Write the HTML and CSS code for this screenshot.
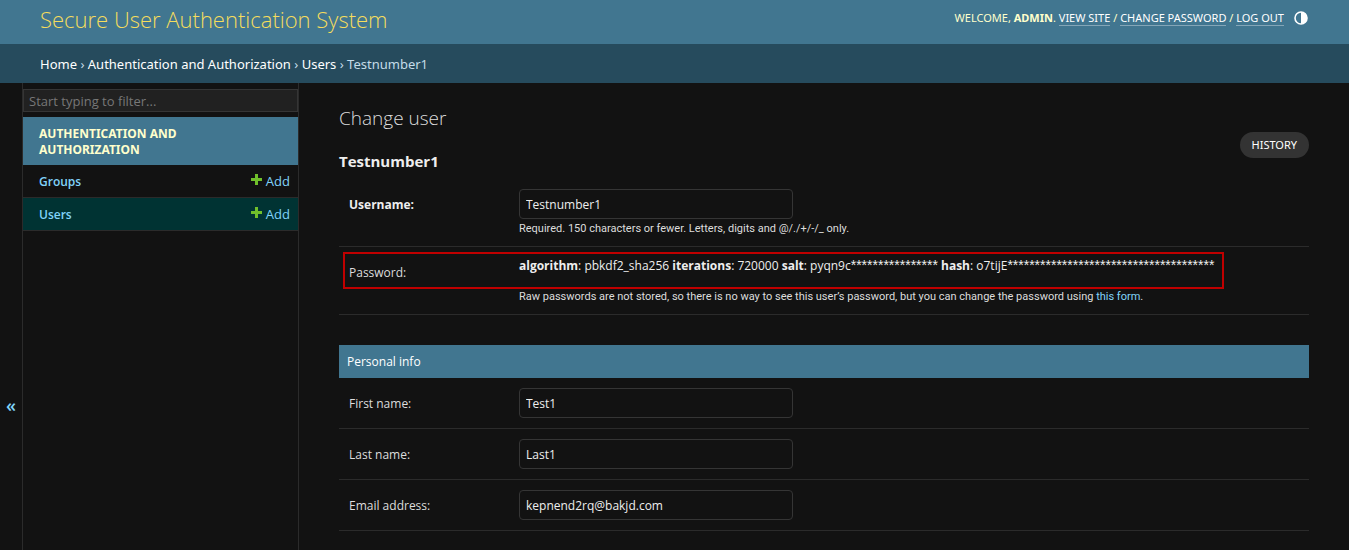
FILE: index.html
```html
<!DOCTYPE html>
<html lang="en">
<head>
<meta charset="utf-8">
<title>Testnumber1 | Change user</title>
<link rel="stylesheet" href="styles.css">
</head>
<body>
<header class="header">
  <h1 class="site-name"><a href="#">Secure User Authentication System</a></h1>
  <div class="user-tools">
    <span>Welcome, <strong>admin</strong>. <a href="#">View site</a> / <a href="#">Change password</a> / <a href="#">Log out</a></span>
    <button class="theme-toggle" type="button" aria-label="Toggle theme">
      <svg viewBox="0 0 14 14" width="14" height="14" aria-hidden="true"><circle cx="7" cy="7" r="6" fill="none" stroke="currentColor" stroke-width="1.6"/><path d="M7 1a6 6 0 0 1 0 12z" fill="currentColor"/></svg>
    </button>
  </div>
</header>
<nav class="breadcrumbs" aria-label="Breadcrumbs">
  <a href="#">Home</a> › <a href="#">Authentication and Authorization</a> › <a href="#">Users</a> › Testnumber1
</nav>
<div class="layout">
  <button class="nav-toggle" type="button" aria-label="Toggle navigation">«</button>
  <nav class="sidebar" aria-label="Sidebar">
    <input class="nav-filter" type="search" placeholder="Start typing to filter..." aria-label="Filter navigation items">
    <table class="app">
      <caption><a href="#">Authentication and Authorization</a></caption>
      <tbody>
      <tr>
        <th scope="row"><a href="#">Groups</a></th>
        <td><a href="#" class="add"><svg viewBox="0 0 11 11" width="11" height="11" aria-hidden="true"><path d="M4 0h3v4h4v3H7v4H4V7H0V4h4z" fill="#70bf2b"/></svg>Add</a></td>
      </tr>
      <tr class="current">
        <th scope="row"><a href="#">Users</a></th>
        <td><a href="#" class="add"><svg viewBox="0 0 11 11" width="11" height="11" aria-hidden="true"><path d="M4 0h3v4h4v3H7v4H4V7H0V4h4z" fill="#70bf2b"/></svg>Add</a></td>
      </tr>
      </tbody>
    </table>
  </nav>
  <main class="content">
    <div class="title-row">
      <div>
        <h2 class="page-title">Change user</h2>
        <h3 class="object-name">Testnumber1</h3>
      </div>
      <a class="history" href="#">History</a>
    </div>
    <form>
      <section class="group">
        <div class="row">
          <label class="label required" for="username">Username:</label>
          <div class="field">
            <input class="text" id="username" type="text" value="Testnumber1">
            <p class="help">Required. 150 characters or fewer. Letters, digits and @/./+/-/_ only.</p>
          </div>
        </div>
        <div class="row">
          <span class="label">Password:</span>
          <div class="field">
            <p class="hash"><strong>algorithm</strong>: pbkdf2_sha256 <strong>iterations</strong>: 720000 <strong>salt</strong>: pyqn9c<span class="mask">****************</span> <strong>hash</strong>: o7tijE<span class="mask">**************************************</span></p>
            <p class="help">Raw passwords are not stored, so there is no way to see this user’s password, but you can change the password using <a href="#">this form</a>.</p>
          </div>
          <div class="marker"></div>
        </div>
      </section>
      <section class="group">
        <h2 class="group-title">Personal info</h2>
        <div class="row">
          <label class="label" for="first">First name:</label>
          <div class="field"><input class="text" id="first" type="text" value="Test1"></div>
        </div>
        <div class="row">
          <label class="label" for="last">Last name:</label>
          <div class="field"><input class="text" id="last" type="text" value="Last1"></div>
        </div>
        <div class="row">
          <label class="label" for="email">Email address:</label>
          <div class="field"><input class="text" id="email" type="text" value="kepnend2rq@bakjd.com"></div>
        </div>
      </section>
    </form>
  </main>
</div>
</body>
</html>
```
FILE: styles.css
```css
* { box-sizing: border-box; }
body {
  margin: 0;
  min-height: 100vh;
  display: flex;
  flex-direction: column;
  background: #121212;
  border-right: 1px solid #fff;
  color: #eee;
  font: 12px/16px "Open Sans", "Noto Sans", sans-serif;
}
a { color: #81d4fa; text-decoration: none; }
h1, h2, h3, p { margin: 0; }
input, button { font: inherit; color: inherit; }
.header {
  display: flex;
  justify-content: space-between;
  align-items: flex-start;
  height: 44px;
  padding: 4px 41px 0 40px;
  background: #417690;
  color: #ffc;
}
.site-name { font-size: 22px; line-height: 30px; font-weight: 300; }
.site-name a { color: #f5dd5d; }
.user-tools {
  display: flex;
  gap: 10px;
  padding-top: 6px;
  font-family: "Noto Sans", sans-serif;
  font-size: 11px;
  text-transform: uppercase;
}
.user-tools a { color: #fff; border-bottom: 1px solid #84a6b8; }
.theme-toggle {
  display: flex;
  align-items: center;
  padding: 0;
  border: 0;
  background: none;
  color: #fff;
}
.breadcrumbs {
  padding: 10px 40px 9px;
  font-family: "Noto Sans", sans-serif;
  font-size: 13px;
  line-height: 20px;
  background: #264b5d;
  color: #c4dce8;
}
.breadcrumbs a { color: #fff; }
.layout { display: flex; flex: 1; }
.nav-toggle {
  flex: 0 0 23px;
  display: flex;
  align-items: flex-start;
  justify-content: center;
  padding: 312px 0 0;
  border: 0;
  border-right: 1px solid #2b2b2b;
  background: none;
  color: #81d4fa;
  font-size: 18px;
  font-weight: 600;
  line-height: 20px;
}
.sidebar {
  flex: 0 0 276px;
  padding-top: 6px;
  border-right: 1px solid #2b2b2b;
}
.nav-filter {
  display: block;
  width: 100%;
  height: 23px;
  margin-bottom: 5px;
  padding: 0 5px;
  border: 1px solid #353535;
  border-radius: 0;
  background: #212121;
  font-size: 13px;
  outline: 0;
}
.nav-filter::placeholder { color: #777; opacity: 1; }
.app { width: 100%; border-collapse: separate; border-spacing: 0; }
.app caption {
  padding: 9px 80px 7px 16px;
  background: #417690;
  text-align: left;
  text-transform: uppercase;
  font-family: "Noto Sans", sans-serif;
  font-size: 12px;
  font-weight: 700;
}
.app caption a { color: #ffc; }
.app th, .app td {
  height: 33px;
  padding: 8px;
  border-bottom: 1px solid #2b2b2b;
  text-align: left;
  font-weight: 600;
}
.app th { padding: 9px 8px 7px 16px; }
.app td { text-align: right; font-size: 13px; font-weight: 400; }
.current { background: #003333; }
.add { display: inline-flex; align-items: center; gap: 4px; vertical-align: top; }
.add svg { margin-bottom: 3px; }
.content { flex: 1; min-width: 0; padding: 20px 40px 18px; }
.title-row { display: flex; justify-content: space-between; }
.page-title {
  margin-bottom: 18px;
  font-size: 19px;
  line-height: 30px;
  font-weight: 300;
  color: #ddd;
}
.object-name { font-size: 15px; line-height: 20px; font-weight: 700; margin-bottom: 8px; }
.history {
  align-self: flex-start;
  margin-top: 29px;
  padding: 5px 12px;
  border-radius: 15px;
  background: #333;
  color: #fff;
  font-family: "Noto Sans", sans-serif;
  font-size: 11px;
  text-transform: uppercase;
}
.group { margin-bottom: 30px; }
.group:last-child { margin-bottom: 0; }
.group-title {
  padding: 8px;
  line-height: 17px;
  font-size: 12px;
  font-weight: 400;
  background: #417690;
  color: #fff;
}
.row {
  position: relative;
  display: flex;
  padding: 10px;
  border-bottom: 1px solid #2b2b2b;
}
.label { flex: 0 0 170px; padding-top: 8px; color: #ddd; }
.required { font-weight: 700; color: #eee; }
.field { flex: 1; min-width: 0; }
.text {
  display: block;
  width: 274px;
  max-width: 100%;
  height: 30px;
  padding: 5px 6px;
  border: 1px solid #353535;
  border-radius: 4px;
  background: #121212;
  outline: 0;
}
.help { padding-top: 3px; font-family: Roboto, sans-serif; font-size: 11px; line-height: 14px; color: #ddd; }
.hash { line-height: 18px; padding-bottom: 12px; }
.mask { font-family: "Liberation Sans", sans-serif; font-size: 14px; line-height: 14px; }
.marker {
  position: absolute;
  top: 5px;
  right: 85px;
  left: 4px;
  height: 37px;
  border: 2px solid #c00000;
  pointer-events: none;
}
```
